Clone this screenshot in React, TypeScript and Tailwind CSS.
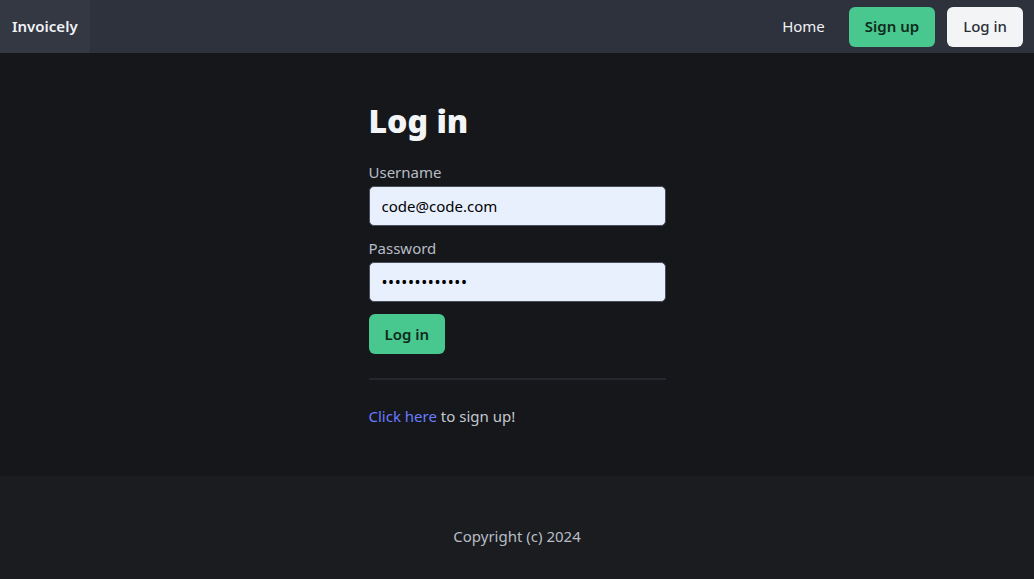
import React from "react";

const font = { fontFamily: '"Noto Sans", "Open Sans", sans-serif' };

const Navbar: React.FC = () => (
  <nav className="flex h-[53px] items-stretch bg-[#2e323c]">
    <a className="flex items-center bg-[#333843] px-3 text-[15px] font-semibold text-[#f1f3f6]">
      Invoicely
    </a>
    <div className="ml-auto flex items-center pr-[11px]">
      <a className="px-3 text-[15px] text-[#f1f3f6]">Home</a>
      <a className="ml-3 flex h-10 items-center rounded-[6px] bg-[#48c78e] px-4 text-[15px] font-semibold text-[#0f2a1c]">
        Sign up
      </a>
      <a className="ml-3 flex h-10 items-center rounded-[6px] bg-[#f3f4f6] px-4 text-[15px] font-medium text-[#2a2e36]">
        Log in
      </a>
    </div>
  </nav>
);

const LoginForm: React.FC = () => {
  const [username, setUsername] = React.useState("code@code.com");
  const [password, setPassword] = React.useState("codecode12345");

  return (
    <section className="flex h-[423px] justify-center bg-[#15171b] pt-[48px]">
      <div className="w-[297px]">
        <h1 className="text-[32px] font-black leading-[40px] text-[#f3f4f6]">Log in</h1>

        <div className="mt-[21px]">
          <label className="block text-[15px] leading-[20px] text-[#b8bcc5]">Username</label>
          <input
            type="text"
            value={username}
            onChange={(e) => setUsername(e.target.value)}
            className="mt-[4px] block h-10 w-full rounded-[5px] border border-[#4a4f5a] bg-[#e8f0fe] px-3 text-[15px] text-black outline-none"
          />
        </div>

        <div className="mt-[12px]">
          <label className="block text-[15px] leading-[20px] text-[#b8bcc5]">Password</label>
          <input
            type="password"
            value={password}
            onChange={(e) => setPassword(e.target.value)}
            className="mt-[4px] block h-10 w-full rounded-[5px] border border-[#4a4f5a] bg-[#e8f0fe] px-3 text-[16px] tracking-[0.6px] text-black outline-none"
          />
        </div>

        <button
          type="button"
          className="mt-3 flex h-10 items-center rounded-[6px] bg-[#48c78e] px-4 text-[15px] font-semibold text-[#0f2a1c]"
        >
          Log in
        </button>

        <hr className="mt-[24px] h-[2px] border-0 bg-[#24272d]" />

        <p className="mt-[24px] text-[15px] leading-[24px] text-[#c4c8d0]">
          <a className="text-[#6b7cff]">Click here</a> to sign up!
        </p>
      </div>
    </section>
  );
};

const Footer: React.FC = () => (
  <footer className="flex h-[103px] items-center justify-center bg-[#1a1c20] pt-[18px]">
    <p className="text-[15px] text-[#b8bcc5]">Copyright (c) 2024</p>
  </footer>
);

export default function App() {
  return (
    <div className="min-h-[579px] bg-[#1a1c20]" style={font}>
      <Navbar />
      <LoginForm />
      <Footer />
    </div>
  );
}
